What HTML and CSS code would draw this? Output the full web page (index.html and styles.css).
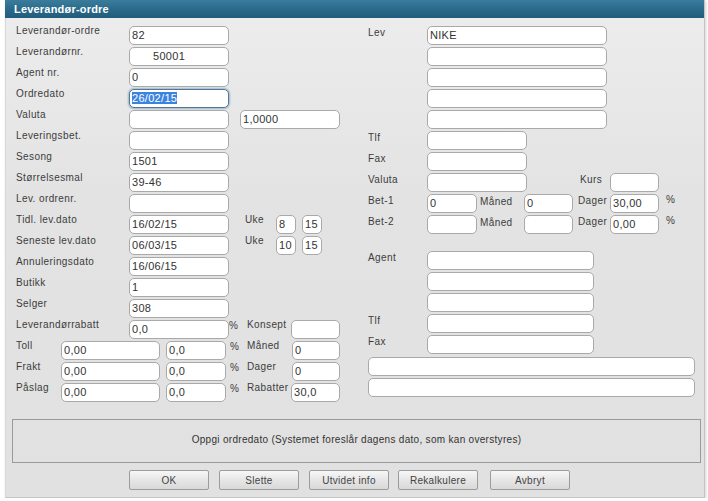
FILE: index.html
```html
<!DOCTYPE html>
<html lang="no">
<head>
<meta charset="utf-8">
<title>Leverandør-ordre</title>
<link rel="stylesheet" href="styles.css">
</head>
<body>
<div class="dialog">
  <div class="titlebar">Leverandør-ordre</div>
  <div class="content">
    <div class="col-left">
      <div class="row"><span class="lbl">Leverandør-ordre</span><div class="fld w100">82</div></div>
      <div class="row"><span class="lbl">Leverandørnr.</span><div class="fld w100 indent">50001</div></div>
      <div class="row"><span class="lbl">Agent nr.</span><div class="fld w100">0</div></div>
      <div class="row"><span class="lbl">Ordredato</span><div class="fld w100 focus"><span class="sel">26/02/15</span></div></div>
      <div class="row"><span class="lbl">Valuta</span><div class="fld w100"></div><div class="fld w100 ml11">1,0000</div></div>
      <div class="row"><span class="lbl">Leveringsbet.</span><div class="fld w100"></div></div>
      <div class="row"><span class="lbl">Sesong</span><div class="fld w100">1501</div></div>
      <div class="row"><span class="lbl">Størrelsesmal</span><div class="fld w100">39-46</div></div>
      <div class="row"><span class="lbl">Lev. ordrenr.</span><div class="fld w100"></div></div>
      <div class="row"><span class="lbl">Tidl. lev.dato</span><div class="fld w100">16/02/15</div><span class="lbl uke">Uke</span><div class="fld w20">8</div><div class="fld w20 ml6">15</div></div>
      <div class="row"><span class="lbl">Seneste lev.dato</span><div class="fld w100">06/03/15</div><span class="lbl uke">Uke</span><div class="fld w20">10</div><div class="fld w20 ml6">15</div></div>
      <div class="row"><span class="lbl">Annuleringsdato</span><div class="fld w100">16/06/15</div></div>
      <div class="row"><span class="lbl">Butikk</span><div class="fld w100">1</div></div>
      <div class="row"><span class="lbl">Selger</span><div class="fld w100">308</div></div>
      <div class="row"><span class="lbl">Leverandørrabatt</span><div class="fld w100">0,0</div><span class="pct">%</span><span class="lbl mid">Konsept</span><div class="fld w49"></div></div>
      <div class="row"><span class="lbl short">Toll</span><div class="fld w99">0,00</div><div class="fld w60 ml6">0,0</div><span class="pct wide">%</span><span class="lbl mid2">Måned</span><div class="fld w48">0</div></div>
      <div class="row"><span class="lbl short">Frakt</span><div class="fld w99">0,00</div><div class="fld w60 ml6">0,0</div><span class="pct wide">%</span><span class="lbl mid2">Dager</span><div class="fld w48">0</div></div>
      <div class="row"><span class="lbl short">Påslag</span><div class="fld w99">0,00</div><div class="fld w60 ml6">0,0</div><span class="pct wide">%</span><span class="lbl mid">Rabatter</span><div class="fld w49">30,0</div></div>
    </div>
    <div class="col-right">
      <div class="row"><span class="rlbl">Lev</span><div class="fld w180">NIKE</div></div>
      <div class="row"><span class="rlbl"></span><div class="fld w180"></div></div>
      <div class="row"><span class="rlbl"></span><div class="fld w180"></div></div>
      <div class="row"><span class="rlbl"></span><div class="fld w180"></div></div>
      <div class="row"><span class="rlbl"></span><div class="fld w180"></div></div>
      <div class="row"><span class="rlbl">Tlf</span><div class="fld w100"></div></div>
      <div class="row"><span class="rlbl">Fax</span><div class="fld w100"></div></div>
      <div class="row"><span class="rlbl">Valuta</span><div class="fld w100"></div><span class="lbl kurs">Kurs</span><div class="fld w49"></div></div>
      <div class="row"><span class="rlbl">Bet-1</span><div class="fld w50">0</div><span class="lbl maned">Måned</span><div class="fld w49">0</div><span class="lbl dager">Dager</span><div class="fld w49">30,00</div><span class="pct rp">%</span></div>
      <div class="row"><span class="rlbl">Bet-2</span><div class="fld w50"></div><span class="lbl maned">Måned</span><div class="fld w49"></div><span class="lbl dager">Dager</span><div class="fld w49">0,00</div><span class="pct rp">%</span></div>
      <div class="agent">
        <div class="row"><span class="rlbl">Agent</span><div class="fld w167"></div></div>
        <div class="row"><span class="rlbl"></span><div class="fld w167"></div></div>
        <div class="row"><span class="rlbl"></span><div class="fld w167"></div></div>
        <div class="row"><span class="rlbl">Tlf</span><div class="fld w167"></div></div>
        <div class="row"><span class="rlbl">Fax</span><div class="fld w167"></div></div>
      </div>
      <div class="wide-block">
        <div class="row"><div class="fld w327"></div></div>
        <div class="row"><div class="fld w327"></div></div>
      </div>
    </div>
  </div>
  <div class="msg">Oppgi ordredato (Systemet foreslår dagens dato, som kan overstyres)</div>
  <div class="buttons">
    <button class="btn">OK</button>
    <button class="btn">Slette</button>
    <button class="btn">Utvidet info</button>
    <button class="btn">Rekalkulere</button>
    <button class="btn">Avbryt</button>
  </div>
</div>
</body>
</html>
```
FILE: styles.css
```css
* { box-sizing: border-box; }
body {
  margin: 0;
  background: #ffffff;
  font-family: "Liberation Sans", Arial, sans-serif;
  color: #333;
}
.dialog {
  margin-left: 5px;
  width: 700px;
  height: 498px;
  background: linear-gradient(#ededed, #e3e3e3 40%, #e1e1e1);
  border-left: 1px solid #d8d8d8;
  border-right: 1px solid #c4c4c4;
  border-bottom: 1px solid #c4c4c4;
  box-shadow: 1px 1px 3px rgba(0, 0, 0, 0.18);
  display: flex;
  flex-direction: column;
}
.titlebar {
  height: 18px;
  margin-left: -1px;
  background: linear-gradient(#3b7c9c, #2b6a8a 50%, #215d7c);
  color: #fff;
  font-weight: bold;
  font-size: 11px;
  line-height: 18px;
  padding-left: 9px;
  letter-spacing: 0.2px;
}
.content {
  display: flex;
  padding: 8px 0 0 10px;
}
.col-left { width: 352px; }
.col-right { width: 330px; }
.row {
  display: flex;
  align-items: flex-start;
  height: 19px;
  margin-bottom: 2px;
}
.lbl, .rlbl, .pct {
  font-size: 10px;
  letter-spacing: 0.4px;
  line-height: 10px;
  color: #3c3c3c;
  white-space: nowrap;
}
.lbl { width: 113px; }
.lbl.short { width: 45px; }
.lbl.uke { width: 31px; margin-left: 16px; }
.lbl.mid { width: 44px; }
.lbl.mid2 { width: 45px; }
.rlbl { width: 59px; padding-top: 2px; }
.lbl.kurs { width: 30px; margin-left: 53px; padding-top: 2px; }
.lbl.maned { width: 47px; padding-left: 3px; padding-top: 3px; }
.lbl.dager { width: 37px; padding-left: 5px; padding-top: 2px; }
.pct { width: 18px; padding-top: 1px; }
.pct.wide { width: 21px; padding-left: 4px; }
.pct.rp { padding-left: 7px; width: 20px; }

.fld {
  height: 19px;
  background: #fff;
  border: 1px solid #a9a9a9;
  border-radius: 5px;
  font-size: 11px;
  letter-spacing: 0.3px;
  line-height: 15px;
  padding: 1px 2px;
  color: #333;
  white-space: nowrap;
  overflow: hidden;
}
.fld.indent { padding-left: 23px; }
.fld.focus {
  border-color: #56778f;
  box-shadow: 0 0 2px 1px #9ab8d0;
}
.sel { background: #3a84e0; color: #fff; }
.w20 { width: 20px; }
.w48 { width: 48px; }
.w49 { width: 49px; }
.w50 { width: 50px; }
.w60 { width: 60px; }
.w99 { width: 99px; }
.w100 { width: 100px; }
.w167 { width: 167px; }
.w180 { width: 180px; }
.w327 { width: 327px; }
.ml6 { margin-left: 6px; }
.ml11 { margin-left: 11px; }

.agent { margin-top: 17px; }
.wide-block { margin-top: 3px; }

.msg {
  margin: 15px 0 0 6px;
  width: 689px;
  height: 44px;
  border: 1px solid #9a9a9a;
  font-size: 10px;
  letter-spacing: 0.3px;
  line-height: 40px;
  text-align: center;
  color: #333;
}
.buttons {
  display: flex;
  gap: 10px;
  margin: 7px 0 0 123px;
}
.btn {
  width: 80px;
  height: 20px;
  padding: 0;
  border: 1px solid #9c9c9c;
  border-radius: 2px;
  background: linear-gradient(#f7f7f7, #e6e6e6 50%, #d9d9d9);
  font-family: "Liberation Sans", Arial, sans-serif;
  font-size: 10px;
  letter-spacing: 0.3px;
  color: #444;
}
.buttons .btn:nth-child(4) { margin-left: -1px; }
.buttons .btn:nth-child(5) { margin-left: 2px; }
```
